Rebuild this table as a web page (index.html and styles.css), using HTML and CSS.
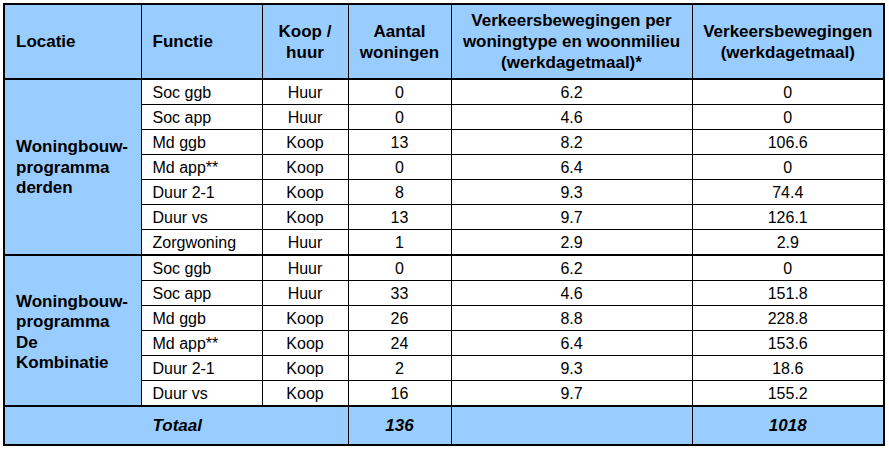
FILE: index.html
```html
<!DOCTYPE html>
<html lang="nl">
<head>
<meta charset="utf-8">
<title>Verkeersbewegingen</title>
<link rel="stylesheet" href="styles.css">
</head>
<body>
<table class="traffic">
  <colgroup>
    <col class="c-loc"><col class="c-fun"><col class="c-kh"><col class="c-aan"><col class="c-vpw"><col class="c-vb">
  </colgroup>
  <thead>
    <tr>
      <th class="left">Locatie</th>
      <th class="left">Functie</th>
      <th>Koop /<br>huur</th>
      <th>Aantal<br>woningen</th>
      <th>Verkeersbewegingen per<br>woningtype en woonmilieu<br>(werkdagetmaal)*</th>
      <th>Verkeersbewegingen<br>(werkdagetmaal)</th>
    </tr>
  </thead>
  <tbody>
    <tr>
      <td class="loc" rowspan="7">Woningbouw-<br>programma<br>derden</td>
      <td class="fun">Soc ggb</td><td>Huur</td><td>0</td><td>6.2</td><td>0</td>
    </tr>
    <tr><td class="fun">Soc app</td><td>Huur</td><td>0</td><td>4.6</td><td>0</td></tr>
    <tr><td class="fun">Md ggb</td><td>Koop</td><td>13</td><td>8.2</td><td>106.6</td></tr>
    <tr><td class="fun">Md app**</td><td>Koop</td><td>0</td><td>6.4</td><td>0</td></tr>
    <tr><td class="fun">Duur 2-1</td><td>Koop</td><td>8</td><td>9.3</td><td>74.4</td></tr>
    <tr><td class="fun">Duur vs</td><td>Koop</td><td>13</td><td>9.7</td><td>126.1</td></tr>
    <tr><td class="fun">Zorgwoning</td><td>Huur</td><td>1</td><td>2.9</td><td>2.9</td></tr>
    <tr class="group">
      <td class="loc loc2" rowspan="6">Woningbouw-<br>programma<br>De<br>Kombinatie</td>
      <td class="fun">Soc ggb</td><td>Huur</td><td>0</td><td>6.2</td><td>0</td>
    </tr>
    <tr><td class="fun">Soc app</td><td>Huur</td><td>33</td><td>4.6</td><td>151.8</td></tr>
    <tr><td class="fun">Md ggb</td><td>Koop</td><td>26</td><td>8.8</td><td>228.8</td></tr>
    <tr><td class="fun">Md app**</td><td>Koop</td><td>24</td><td>6.4</td><td>153.6</td></tr>
    <tr><td class="fun">Duur 2-1</td><td>Koop</td><td>2</td><td>9.3</td><td>18.6</td></tr>
    <tr><td class="fun">Duur vs</td><td>Koop</td><td>16</td><td>9.7</td><td>155.2</td></tr>
  </tbody>
  <tfoot>
    <tr class="total">
      <td colspan="3" class="tot-label">Totaal</td>
      <td>136</td>
      <td class="tot-empty"></td>
      <td>1018</td>
    </tr>
  </tfoot>
</table>
</body>
</html>
```

FILE: styles.css
```css
html, body {
  margin: 0;
  padding: 0;
  background: #ffffff;
}

body {
  padding: 3px 0 0 3px;
}

.traffic {
  border-collapse: collapse;
  table-layout: fixed;
  width: 882px;
  border: 2px solid #000;
  font-family: "Liberation Sans", Arial, sans-serif;
  font-size: 16px;
  color: #000;
}

.c-loc { width: 137px; }
.c-fun { width: 121px; }
.c-kh { width: 86px; }
.c-aan { width: 103px; }
.c-vpw { width: 241px; }
.c-vb { width: 192px; }

.traffic th,
.traffic td {
  border: 1px solid #000;
  padding: 0;
  text-align: center;
  vertical-align: middle;
}

.traffic thead th {
  background: #99ccff;
  height: 73px;
  font-size: 17px;
  font-weight: bold;
  line-height: 21px;
  border-bottom: 2px solid #000;
}

.traffic thead th.left {
  text-align: left;
  padding-left: 11px;
}

.traffic tbody td {
  height: 22px;
  line-height: 18px;
  padding-top: 2px;
}

.traffic td.fun {
  text-align: left;
  padding-left: 11px;
}

.traffic td.loc {
  background: #99ccff;
  text-align: left;
  padding-left: 11px;
  font-size: 17px;
  font-weight: bold;
  line-height: 20.5px;
}

.traffic td.loc2 {
  padding-top: 4px;
}

.traffic tr.group td {
  border-top: 2px solid #000;
}

.traffic .total td {
  background: #99ccff;
  height: 36px;
  padding-top: 1px;
  border-top: 2px solid #000;
  font-size: 17px;
  font-weight: bold;
  font-style: italic;
}

.traffic .total td.tot-label {
  padding-left: 2px;
}
```
